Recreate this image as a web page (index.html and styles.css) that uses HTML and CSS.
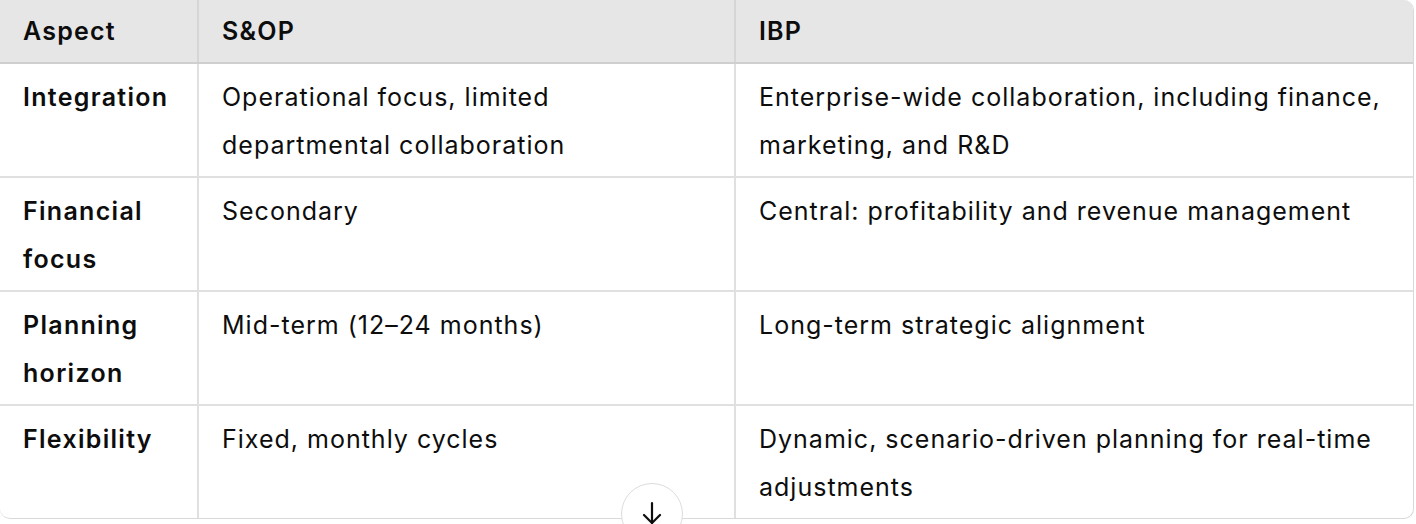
FILE: index.html
```html
<!DOCTYPE html>
<html lang="en">
<head>
<meta charset="utf-8">
<title>S&amp;OP vs IBP</title>
<link rel="stylesheet" href="styles.css">
</head>
<body>
<div class="page">
  <div class="table-wrap">
    <table class="cmp">
      <colgroup>
        <col class="c1"><col class="c2"><col class="c3">
      </colgroup>
      <thead>
        <tr><th>Aspect</th><th>S&amp;OP</th><th>IBP</th></tr>
      </thead>
      <tbody>
        <tr>
          <td class="aspect">Integration</td>
          <td>Operational focus, limited departmental collaboration</td>
          <td>Enterprise-wide collaboration, including finance, marketing, and R&amp;D</td>
        </tr>
        <tr>
          <td class="aspect">Financial focus</td>
          <td>Secondary</td>
          <td>Central: profitability and revenue management</td>
        </tr>
        <tr>
          <td class="aspect">Planning horizon</td>
          <td>Mid-term (12–24 months)</td>
          <td>Long-term strategic alignment</td>
        </tr>
        <tr>
          <td class="aspect">Flexibility</td>
          <td>Fixed, monthly cycles</td>
          <td>Dynamic, scenario-driven planning for real-time adjustments</td>
        </tr>
      </tbody>
    </table>
  </div>
  <button class="scroll-btn" type="button" aria-label="Scroll down">
    <svg width="26" height="26" viewBox="0 0 26 26" fill="none" stroke="#0d0d0d" stroke-width="2.2" stroke-linecap="round" stroke-linejoin="round">
      <path d="M13 3 V23"/>
      <path d="M5 15 L13 23 L21 15"/>
    </svg>
  </button>
</div>
</body>
</html>
```

FILE: styles.css
```css
html, body {
  margin: 0;
  padding: 0;
  background: #ffffff;
}

body {
  font-family: Inter, "Noto Sans", "Liberation Sans", sans-serif;
  color: #0d0d0d;
  overflow: hidden;
}

.page {
  position: relative;
  width: 1416px;
  height: 524px;
}

.table-wrap {
  width: 1413px;
  border: 1px solid #d9d9d9;
  border-top: none;
  border-left: none;
  border-radius: 0 10px 10px 10px;
  overflow: hidden;
}

.cmp {
  width: 100%;
  border-collapse: collapse;
  table-layout: fixed;
  font-size: 25px;
  line-height: 48px;
  letter-spacing: 1px;
}

.c1 { width: 198px; }
.c2 { width: 537px; }

.cmp th {
  background: #e6e6e6;
  text-align: left;
  font-weight: 600;
  padding: 7px 24px 7px 23px;
  border-bottom: 2px solid #cfcfcf;
  border-left: 2px solid #d6d6d6;
  letter-spacing: 1.2px;
}

.cmp td {
  vertical-align: top;
  padding: 9px 20px 7px 23px;
  border-left: 2px solid #e0e0e0;
  border-bottom: 2px solid #e0e0e0;
}

.cmp th:first-child,
.cmp td:first-child {
  border-left: none;
}

.cmp tbody tr:last-child td {
  border-bottom: none;
}

.cmp td.aspect {
  font-weight: 600;
  letter-spacing: 1.3px;
}

.scroll-btn {
  position: absolute;
  left: 621px;
  top: 483px;
  width: 62px;
  height: 62px;
  border-radius: 50%;
  border: 1px solid #dcdcdc;
  background: #ffffff;
  display: flex;
  align-items: center;
  justify-content: center;
  padding: 0;
  cursor: pointer;
}

.scroll-btn svg {
  display: block;
  margin-top: -2px;
}
```
